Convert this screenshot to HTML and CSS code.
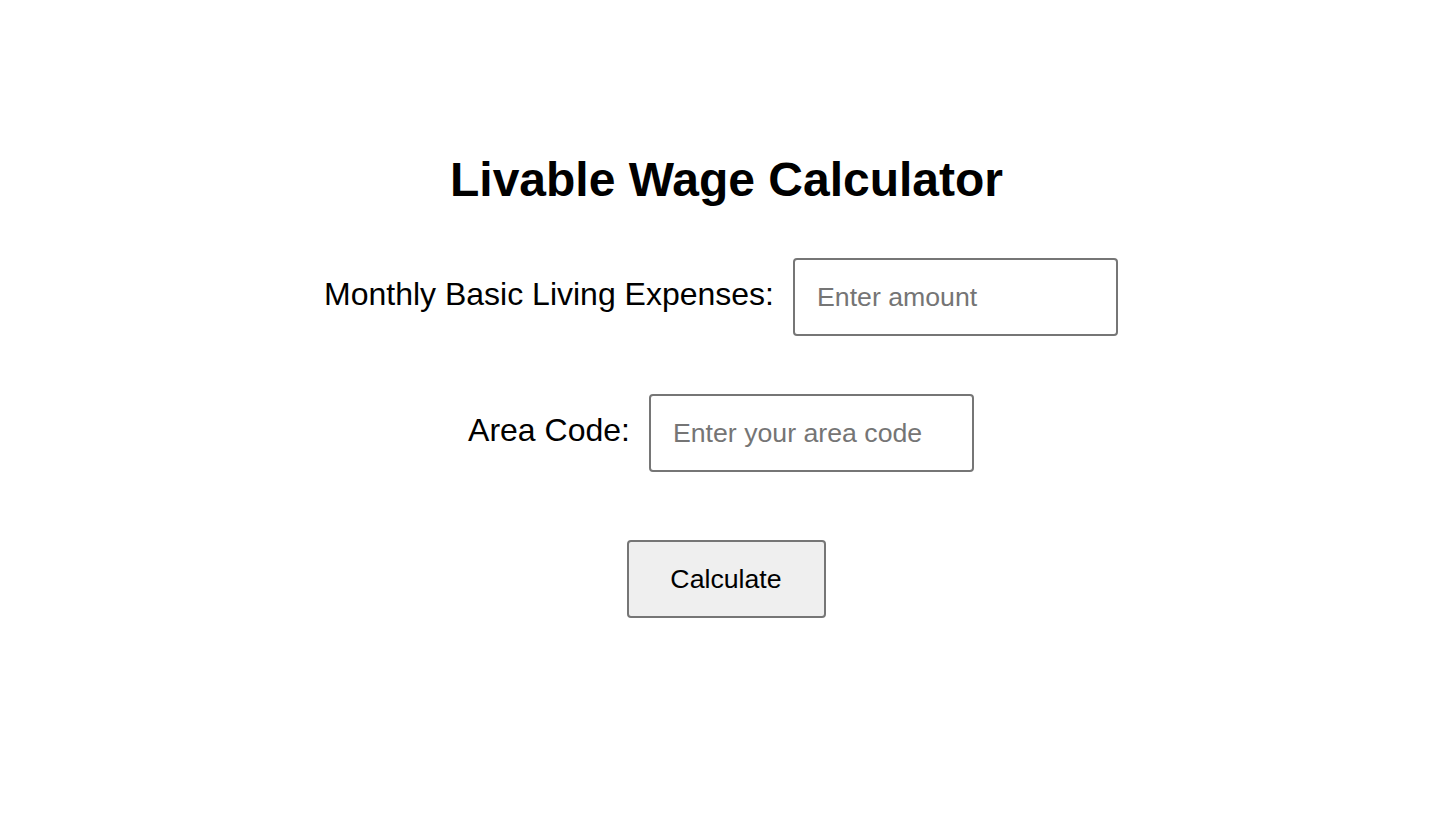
FILE: index.html
```html
<!DOCTYPE html>
<html>
<head>
<meta charset="utf-8">
<link rel="stylesheet" href="styles.css">
</head>
<body>
<main class="calc">
  <h1 class="title">Livable Wage Calculator</h1>
  <div class="row row-first">
    <label class="label" for="exp">Monthly Basic Living Expenses:</label>
    <input class="field" id="exp" type="text" placeholder="Enter amount">
  </div>
  <div class="row">
    <label class="label" for="area">Area Code:</label>
    <input class="field" id="area" type="text" placeholder="Enter your area code">
  </div>
  <button class="btn" type="button">Calculate</button>
</main>
</body>
</html>
```
FILE: styles.css
```css
html, body {
  margin: 0;
  padding: 0;
  background: #ffffff;
}
body {
  font-family: "Liberation Sans", Arial, sans-serif;
  color: #000;
}
.calc {
  display: flex;
  flex-direction: column;
  align-items: center;
  padding-top: 150px;
}
.title {
  margin: 0 0 0 11px;
  font-size: 48px;
  font-weight: bold;
  line-height: 60px;
}
.row {
  display: flex;
  align-items: center;
  gap: 19px;
  margin-top: 58px;
}
.row-first {
  margin-top: 48px;
}
.label {
  font-size: 32px;
  padding-bottom: 5px;
}
.field {
  box-sizing: border-box;
  width: 325px;
  height: 78px;
  padding: 0 22px;
  border: 2px solid #767676;
  border-radius: 4px;
  font-family: "Liberation Sans", Arial, sans-serif;
  font-size: 26.7px;
  color: #000;
  background: #fff;
  outline: none;
}
.field::placeholder {
  color: #757575;
}
.btn {
  box-sizing: border-box;
  margin-top: 68px;
  margin-left: 10px;
  width: 199px;
  height: 78px;
  border: 2px solid #767676;
  border-radius: 4px;
  background: #efefef;
  font-family: "Liberation Sans", Arial, sans-serif;
  font-size: 26.7px;
  color: #000;
}
```
